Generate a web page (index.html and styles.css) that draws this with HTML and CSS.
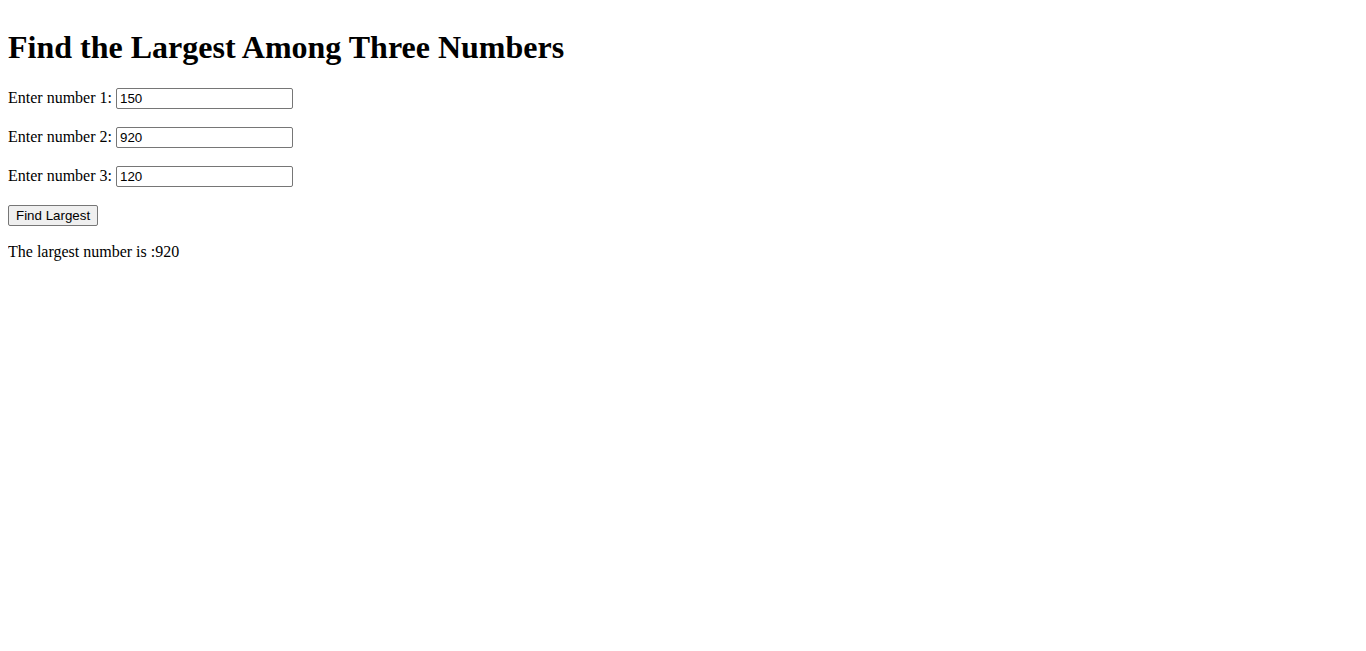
FILE: index.html
```html
<!DOCTYPE html>
<html>
<head>
<meta charset="utf-8">
<title>Find the Largest Among Three Numbers</title>
<link rel="stylesheet" href="styles.css">
</head>
<body class="page">
<h1 class="title">Find the Largest Among Three Numbers</h1>
<p class="row">Enter number 1: <input class="num" type="text" value="150"></p>
<p class="row">Enter number 2: <input class="num" type="text" value="920"></p>
<p class="row">Enter number 3: <input class="num" type="text" value="120"></p>
<p class="row row-btn"><button class="btn" type="button">Find Largest</button></p>
<p class="result">The largest number is :920</p>
</body>
</html>
```
FILE: styles.css
```css
.page {
  margin: 8px;
  font-family: "Liberation Serif", "Times New Roman", serif;
  font-size: 16px;
  color: #000;
  background: #fff;
}
.title {
  font-size: 2em;
  font-weight: bold;
  margin: 0.67em 0;
}
.row {
  margin: 16px 0 18px;
}
.row-btn {
  margin-bottom: 17px;
}
.result {
  margin: 16px 0;
}
.num {
  font-family: "Liberation Sans", Arial, sans-serif;
  font-size: 13.333px;
  width: 170px;
  height: 17px;
  padding: 1px 2px 1px 3px;
  border: 1px solid #767676;
  border-radius: 2px;
  color: #000;
  box-sizing: content-box;
  vertical-align: baseline;
}
.btn {
  font-family: "Liberation Sans", Arial, sans-serif;
  font-size: 13.333px;
  height: 21px;
  padding: 1px 7px;
  border: 1px solid #767676;
  border-radius: 2px;
  background: #efefef;
  color: #000;
  box-sizing: border-box;
}
```
